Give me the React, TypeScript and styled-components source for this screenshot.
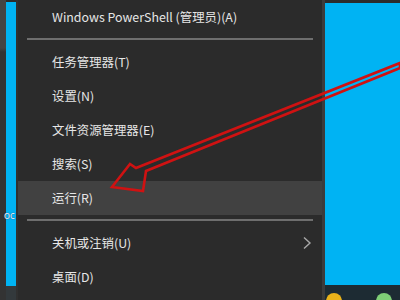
import React from "react";
import styled, { createGlobalStyle } from "styled-components";

const Global = createGlobalStyle`
  html, body { margin: 0; padding: 0; background: #2a2a2a; }
  body { width: 400px; height: 300px; overflow: hidden; font-family: "Noto Sans CJK SC", sans-serif; }
`;

const Screen = styled.div`
  position: relative;
  display: flex;
  width: 400px;
  height: 300px;
  overflow: hidden;
  background: #2a2a2a;
`;

const LeftStrip = styled.div`
  display: flex;
  width: 18px;
  flex: none;
`;

const GrayEdge = styled.div`
  width: 6px;
  background: linear-gradient(#444 0, #444 48px, #333 52px, #333 100%);
`;

const DesktopColumn = styled.div`
  position: relative;
  display: flex;
  flex-direction: column;
  width: 10px;
`;

const TopBand = styled.div<{ $h: number }>`
  height: ${(p) => p.$h}px;
  background: #2c2c2c;
  flex: none;
`;

const Blue = styled.div`
  flex: 1;
  background: #00b3f3;
`;

const BottomDark = styled.div<{ $h: number }>`
  height: ${(p) => p.$h}px;
  background: #33393c;
  flex: none;
`;

const Gap = styled.div`
  width: 2px;
  background: #303030;
`;

const DesktopLabel = styled.span`
  position: absolute;
  left: -2px;
  top: 208px;
  font-size: 10px;
  color: #e8f4ff;
  text-shadow: 0 0 1px #0a2a55;
  font-family: "Noto Sans", sans-serif;
  white-space: nowrap;
`;

const Menu = styled.div`
  display: flex;
  flex-direction: column;
  width: 304px;
  flex: none;
  background: #2b2b2b;
  border-right: 3px solid #3c3c3c;
`;

const Item = styled.div<{ $active?: boolean }>`
  position: relative;
  display: flex;
  align-items: center;
  height: 34px;
  padding-left: 34px;
  padding-right: 10px;
  color: #e6e6e6;
  font-size: 12.4px;
  font-family: "Noto Sans CJK SC", sans-serif;
  background: ${(p) => (p.$active ? "#414141" : "transparent")};
  white-space: nowrap;
`;

const ItemText = styled.span`
  flex: 1;
`;

const Separator = styled.div`
  height: 2px;
  margin: 4px 9px 5px 9px;
  background: #6e6e6e;
`;

const RightArea = styled.div`
  flex: 1;
  display: flex;
  flex-direction: column;
`;

const Taskbar = styled.div`
  height: 15px;
  flex: none;
  display: flex;
  align-items: flex-start;
  padding-top: 8px;
  padding-left: 1px;
  gap: 34px;
  background: #1d2b33;
  box-sizing: border-box;
`;

const Dot = styled.div<{ $c: string }>`
  width: 16px;
  height: 16px;
  border-radius: 50%;
  background: ${(p) => p.$c};
`;

const ArrowLayer = styled.svg`
  position: absolute;
  left: 0;
  top: 0;
  pointer-events: none;
`;

const Chevron = () => (
  <svg width="10" height="14" viewBox="0 0 10 14">
    <polyline points="2,1.5 8,7 2,12.5" fill="none" stroke="#a8a8a8" strokeWidth="1.4" />
  </svg>
);

export default function App() {
  return (
    <Screen>
      <Global />
      <LeftStrip>
        <GrayEdge />
        <DesktopColumn>
          <TopBand $h={2} />
          <Blue />
          <BottomDark $h={14} />
          <DesktopLabel>oc</DesktopLabel>
        </DesktopColumn>
        <Gap />
      </LeftStrip>
      <Menu>
        <Item>
          <ItemText>Windows PowerShell (管理员)(A)</ItemText>
        </Item>
        <Separator />
        <Item>
          <ItemText>任务管理器(T)</ItemText>
        </Item>
        <Item>
          <ItemText>设置(N)</ItemText>
        </Item>
        <Item>
          <ItemText>文件资源管理器(E)</ItemText>
        </Item>
        <Item>
          <ItemText>搜索(S)</ItemText>
        </Item>
        <Item $active>
          <ItemText>运行(R)</ItemText>
        </Item>
        <Separator />
        <Item>
          <ItemText>关机或注销(U)</ItemText>
          <Chevron />
        </Item>
        <Item>
          <ItemText>桌面(D)</ItemText>
        </Item>
      </Menu>
      <RightArea>
        <TopBand $h={3} />
        <Blue />
        <Taskbar>
          <Dot $c="#e9b21a" />
          <Dot $c="#7fcf76" />
        </Taskbar>
      </RightArea>
      <ArrowLayer width="400" height="300" viewBox="0 0 400 300">
        <polygon
          points="112,187 130,164 136,168 400,63 400,68 146,171 143,191"
          fill="none"
          stroke="#cf1212"
          strokeWidth="2.6"
          strokeLinejoin="miter"
        />
      </ArrowLayer>
    </Screen>
  );
}
